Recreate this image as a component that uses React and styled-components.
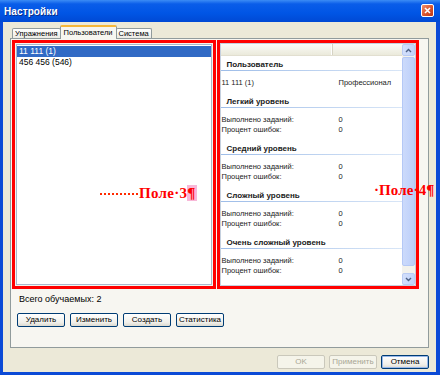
import React from 'react';
import styled, { createGlobalStyle } from 'styled-components';

const GlobalStyle = createGlobalStyle`
  html, body {
    margin: 0;
    padding: 0;
    background: #ffffff;
  }
  body {
    font-family: "Liberation Sans", Arial, sans-serif;
  }
`;

const Window = styled.div`
  position: relative;
  width: 440px;
  height: 375px;
  background: #0B4AD6;
  display: flex;
  flex-direction: column;
  overflow: hidden;
`;

const TitleBar = styled.div`
  height: 22px;
  flex: none;
  display: flex;
  align-items: center;
  justify-content: space-between;
  padding: 0 6px 0 4px;
  background: linear-gradient(#3C8CF5 0%, #0A5DE9 18%, #0055E5 60%, #0049D4 100%);
`;

const Title = styled.span`
  color: #ffffff;
  font-weight: bold;
  font-size: 10px;
  letter-spacing: 0.1px;
  text-shadow: 1px 1px 0 #0B2E8A;
`;

const CloseButton = styled.div`
  width: 11px;
  height: 11px;
  margin-top: -1px;
  border: 1px solid #ffffff;
  border-radius: 2px;
  background: linear-gradient(135deg, #F0906E 0%, #D9532C 55%, #B8371A 100%);
  display: flex;
  align-items: center;
  justify-content: center;
`;

const Body = styled.div`
  flex: 1;
  margin: 0 4px 3px 3px;
  background: #ECE9D8;
  display: flex;
  flex-direction: column;
  padding: 3px 7px 3px 7px;
`;

const TabStrip = styled.div`
  height: 14px;
  flex: none;
  display: flex;
  align-items: flex-end;
  padding-left: 2px;
  margin-bottom: -1px;
  position: relative;
  z-index: 1;
`;

const Tab = styled.div`
  box-sizing: border-box;
  height: ${p => (p.$active ? '14px' : '10px')};
  margin-bottom: ${p => (p.$active ? '0' : '1px')};
  padding: 0 ${p => (p.$active ? '3px' : '2px')};
  border: 1px solid #919B9C;
  border-bottom: none;
  border-top: ${p => (p.$active ? '2px solid #F5B739' : '1px solid #919B9C')};
  border-radius: 2px 2px 0 0;
  margin-left: ${p => (p.$active ? '-1px' : '0')};
  margin-right: ${p => (p.$active ? '-1px' : '0')};
  background: ${p => (p.$active ? '#F7F6F1' : 'linear-gradient(#FFFFFF, #ECEBE5)')};
  font-size: 7.5px;
  line-height: ${p => (p.$active ? '11px' : '9px')};
  color: #000000;
  white-space: nowrap;
  position: relative;
  z-index: ${p => (p.$active ? 2 : 1)};
`;

const Panel = styled.div`
  height: 310px;
  box-sizing: border-box;
  flex: none;
  border: 1px solid #919B9C;
  background: #F7F6F1;
  padding: 1px 9px 0 1px;
  display: flex;
  flex-direction: column;
`;

const BoxRow = styled.div`
  height: 249px;
  display: flex;
  gap: 1px;
`;

const RedBox = styled.div`
  width: ${p => p.$width}px;
  box-sizing: border-box;
  border: 3px solid #FF0000;
  padding: ${p => p.$pad || 0}px;
  background: #F4F3EE;
  display: flex;
`;

const ListBox = styled.div`
  flex: 1;
  border: 1px solid #A9B8CC;
  background: #ffffff;
  padding: 1px 0;
`;

const ListItem = styled.div`
  height: 11px;
  line-height: 10px;
  font-size: 8.5px;
  padding-left: 2px;
  color: ${p => (p.$selected ? '#ffffff' : '#000000')};
  background: ${p => (p.$selected ? '#316AC5' : 'transparent')};
`;

const ListView = styled.div`
  flex: 1;
  display: flex;
  border: 1px solid #C5D0DE;
  background: #ffffff;
  overflow: hidden;
`;

const ViewContent = styled.div`
  flex: 1;
  display: flex;
  flex-direction: column;
  overflow: hidden;
`;

const HeaderRow = styled.div`
  height: 12px;
  flex: none;
  display: grid;
  grid-template-columns: 112px 1fr;
  background: linear-gradient(#FBFBF8, #EBEADB);
  border-bottom: 1px solid #E2DFD0;
  box-sizing: border-box;
`;

const HeaderCell = styled.div`
  border-right: 1px solid #D6D3C4;
  box-shadow: inset -1px 0 0 #ffffff;
`;

const Group = styled.div`
  margin-top: ${p => (p.$first ? 4 : 9)}px;
`;

const GroupTitle = styled.div`
  height: 10px;
  line-height: 10px;
  font-size: 8px;
  font-weight: bold;
  padding-left: 6px;
  color: #1A1A1A;
  border-bottom: 1px solid transparent;
  border-image: linear-gradient(to right, #9DBCE8, #D9E6F7) 1;
`;

const Rows = styled.div`
  margin-top: 7px;
`;

const Row = styled.div`
  display: grid;
  grid-template-columns: 117px 1fr;
  height: 10px;
  line-height: 10px;
  font-size: 7.5px;
  padding-left: 1px;
  color: #222222;
`;

const ScrollBar = styled.div`
  width: 13px;
  flex: none;
  display: flex;
  flex-direction: column;
  background: #F3F2EC;
`;

const ScrollButton = styled.div`
  height: 12px;
  flex: none;
  box-sizing: border-box;
  border: 1px solid #B9CBF3;
  border-radius: 2px;
  background: linear-gradient(to right, #D4E0FB, #C1D3FB);
  display: flex;
  align-items: center;
  justify-content: center;
`;

const Thumb = styled.div`
  flex: 1;
  margin: 1px 0 7px;
  box-sizing: border-box;
  border: 1px solid #B4C8F6;
  border-radius: 2px;
  background: linear-gradient(to right, #CCDAFB, #BCCFFA);
`;

const CountText = styled.div`
  margin-top: 5px;
  padding-left: 7px;
  height: 11px;
  line-height: 11px;
  font-size: 9px;
  color: #000000;
`;

const ButtonRow = styled.div`
  display: flex;
  gap: 5px;
  margin-top: 8px;
  padding-left: ${p => p.$indent || 0}px;
`;

const Button = styled.div`
  width: 48px;
  height: 14px;
  box-sizing: border-box;
  border: 1px solid ${p => (p.$disabled ? '#CAC8BB' : '#003C74')};
  border-radius: 2px;
  background: ${p => (p.$disabled ? '#F5F4EA' : 'linear-gradient(#FFFFFF, #F0EFEA 70%, #DCDAD0)')};
  box-shadow: ${p => (p.$focus ? 'inset 0 0 0 1px #98B8EA' : 'none')};
  color: ${p => (p.$disabled ? '#A9A796' : '#000000')};
  font-size: 8px;
  line-height: 12px;
  text-align: center;
`;

const Footer = styled.div`
  display: flex;
  justify-content: flex-end;
  gap: 4px;
  margin-top: 7px;
`;

const FieldLabel = styled.div`
  position: absolute;
  left: ${p => p.$left}px;
  top: ${p => p.$top}px;
  font-family: "Liberation Serif", "Times New Roman", serif;
  font-weight: bold;
  font-size: 15px;
  letter-spacing: ${p => p.$spacing || 0}px;
  line-height: 16px;
  color: #FF0000;
  white-space: nowrap;
  display: flex;
  align-items: center;
`;

const Leader = styled.span`
  display: inline-block;
  width: 38px;
  height: 0;
  border-top: 2px dotted #FF2A00;
  margin-right: 1px;
  position: relative;
  top: 1px;
`;

const Pilcrow = styled.span`
  color: #FF0000;
  background: ${p => (p.$marked ? '#F8B8D8' : 'transparent')};
  padding-right: 1px;
`;

const Chevron = ({ down }) => (
  <svg width="7" height="5" viewBox="0 0 7 5">
    <path
      d={down ? 'M1 1 L3.5 3.5 L6 1' : 'M1 4 L3.5 1.5 L6 4'}
      fill="none"
      stroke="#4D6185"
      strokeWidth="1.4"
    />
  </svg>
);

const stats = [
  { title: 'Легкий уровень' },
  { title: 'Средний уровень' },
  { title: 'Сложный уровень' },
  { title: 'Очень сложный уровень' },
];

const App = () => (
  <>
    <GlobalStyle />
    <Window>
      <TitleBar>
        <Title>Настройки</Title>
        <CloseButton>
          <svg width="7" height="7" viewBox="0 0 7 7">
            <path d="M1 1 L6 6 M6 1 L1 6" stroke="#ffffff" strokeWidth="1.6" />
          </svg>
        </CloseButton>
      </TitleBar>
      <Body>
        <TabStrip>
          <Tab>Упражнения</Tab>
          <Tab $active>Пользователи</Tab>
          <Tab>Система</Tab>
        </TabStrip>
        <Panel>
          <BoxRow>
            <RedBox $width={204} $pad={1}>
              <ListBox>
                <ListItem $selected>11 111 (1)</ListItem>
                <ListItem>456 456 (546)</ListItem>
              </ListBox>
            </RedBox>
            <RedBox $width={203}>
              <ListView>
                <ViewContent>
                  <HeaderRow>
                    <HeaderCell />
                    <div />
                  </HeaderRow>
                  <Group $first>
                    <GroupTitle>Пользователь</GroupTitle>
                    <Rows>
                      <Row>
                        <span>11 111 (1)</span>
                        <span>Профессионал</span>
                      </Row>
                    </Rows>
                  </Group>
                  {stats.map(s => (
                    <Group key={s.title}>
                      <GroupTitle>{s.title}</GroupTitle>
                      <Rows>
                        <Row>
                          <span>Выполнено заданий:</span>
                          <span>0</span>
                        </Row>
                        <Row>
                          <span>Процент ошибок:</span>
                          <span>0</span>
                        </Row>
                      </Rows>
                    </Group>
                  ))}
                </ViewContent>
                <ScrollBar>
                  <ScrollButton><Chevron /></ScrollButton>
                  <Thumb />
                  <ScrollButton><Chevron down /></ScrollButton>
                </ScrollBar>
              </ListView>
            </RedBox>
          </BoxRow>
          <CountText>Всего обучаемых: 2</CountText>
          <ButtonRow $indent={5}>
            <Button>Удалить</Button>
            <Button>Изменить</Button>
            <Button>Создать</Button>
            <Button>Статистика</Button>
          </ButtonRow>
        </Panel>
        <Footer>
          <Button $disabled>OK</Button>
          <Button $disabled>Применить</Button>
          <Button $focus>Отмена</Button>
        </Footer>
      </Body>
      <FieldLabel $left={100} $top={185} $spacing={0.3}>
        <Leader />
        Поле·3<Pilcrow $marked>¶</Pilcrow>
      </FieldLabel>
      <FieldLabel $left={374} $top={182} $spacing={0.1}>
        ·Поле·4<Pilcrow>¶</Pilcrow>
      </FieldLabel>
    </Window>
  </>
);

export default App;
